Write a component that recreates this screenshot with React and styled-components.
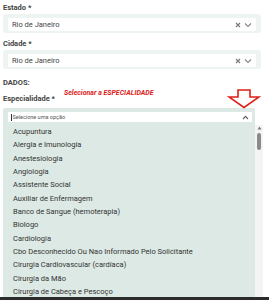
import React from "react";
import styled, { createGlobalStyle } from "styled-components";

const Global = createGlobalStyle`
  html, body { margin: 0; padding: 0; background: #fff; }
  body { font-family: Roboto, "Liberation Sans", Arial, sans-serif; color: #333; }
  * { box-sizing: border-box; }
`;

const Page = styled.div`
  width: 269px;
  height: 300px;
  overflow: hidden;
  position: relative;
  display: flex;
  flex-direction: column;
`;

const Body = styled.div`
  flex: 1;
  min-height: 0;
  padding: 2px 8px 0 3px;
  display: flex;
  flex-direction: column;
  overflow: hidden;
`;

const Label = styled.div`
  position: relative;
  font-size: 7.5px;
  font-weight: 700;
  color: #444;
  height: 11px;
  line-height: 11px;
  margin-top: ${(p) => p.$mt || 0}px;
`;

const Annotation = styled.span`
  position: absolute;
  left: 61px;
  top: -5px;
  color: #e0201a;
  font-style: italic;
  font-weight: 700;
  font-size: 7px;
  white-space: nowrap;
`;

const SelectOuter = styled.div`
  margin-top: 1px;
  background: #eef4f1;
  border-radius: 3px;
  padding: 4px 5px 2px 5px;
  height: 19px;
`;

const SelectInner = styled.div`
  background: #fff;
  height: 13px;
  border-radius: 2px;
  display: flex;
  align-items: center;
  padding: 0 4px 0 4px;
  font-size: 7.5px;
  color: #444;
`;

const Value = styled.span`
  flex: 1;
`;

const Icons = styled.span`
  display: flex;
  align-items: center;
  gap: 3px;
  color: #888;
`;

const Dropdown = styled.div`
  margin-top: 4px;
  margin-right: -2px;
  flex: 1;
  min-height: 0;
  display: flex;
  flex-direction: column;
  overflow: hidden;
`;

const Header = styled.div`
  background: #dce9e4;
  padding: 4px 3px 3px 5px;
  margin-right: 8px;
  border-radius: 2px 2px 0 0;
`;

const Search = styled.div`
  background: #fff;
  height: 10px;
  display: flex;
  align-items: center;
  padding-left: 3px;
  padding-right: 3px;
  font-size: 5.5px;
  color: #555;
`;

const Caret = styled.span`
  width: 0.5px;
  height: 7px;
  background: #333;
  margin-right: 1px;
`;

const ListWrap = styled.div`
  flex: 1;
  min-height: 0;
  display: flex;
  overflow: hidden;
`;

const List = styled.ul`
  flex: 1;
  list-style: none;
  margin: 0;
  padding: 0;
  background: #dce9e4;
`;

const Item = styled.li`
  height: 13.35px;
  line-height: 13.35px;
  padding-left: 10px;
  font-size: 7.5px;
  color: #333;
  white-space: nowrap;
`;

const Scroll = styled.div`
  width: 8px;
  background: #f4f4f4;
  display: flex;
  flex-direction: column;
  align-items: center;
  padding-top: 1px;
`;

const Thumb = styled.div`
  width: 4px;
  height: 17px;
  margin-top: 3px;
  border-radius: 2px;
  background: #8a8a8a;
`;

const Footer = styled.div`
  flex: none;
  height: 3px;
  background: #2b2b2b;
`;

const ArrowSvg = styled.svg`
  position: absolute;
  left: 227px;
  top: 89px;
`;

const X = () => (
  <svg width="6" height="6" viewBox="0 0 6 6">
    <path d="M1 1L5 5M5 1L1 5" stroke="#777" strokeWidth="1.1" />
  </svg>
);
const Down = () => (
  <svg width="8" height="6" viewBox="0 0 8 6">
    <path d="M1 1.5L4 4.5L7 1.5" stroke="#888" strokeWidth="1.1" fill="none" />
  </svg>
);
const Up = () => (
  <svg width="7" height="5" viewBox="0 0 7 5">
    <path d="M1 4L3.5 1.3L6 4" stroke="#666" strokeWidth="1.2" fill="none" />
  </svg>
);

const items = [
  "Acupuntura",
  "Alergia e Imunologia",
  "Anestesiologia",
  "Angiologia",
  "Assistente Social",
  "Auxiliar de Enfermagem",
  "Banco de Sangue (hemoterapia)",
  "Biologo",
  "Cardiologia",
  "Cbo Desconhecido Ou Nao Informado Pelo Solicitante",
  "Cirurgia Cardiovascular (cardíaca)",
  "Cirurgia da Mão",
  "Cirurgia de Cabeça e Pescoço",
];

function Select({ value }) {
  return (
    <SelectOuter>
      <SelectInner>
        <Value>{value}</Value>
        <Icons>
          <X />
          <Down />
        </Icons>
      </SelectInner>
    </SelectOuter>
  );
}

export default function App() {
  return (
    <>
      <Global />
      <Page>
        <Body>
          <Label>Estado *</Label>
          <Select value="Rio de Janeiro" />
          <Label $mt={5}>Cidade *</Label>
          <Select value="Rio de Janeiro" />
          <Label $mt={8}>DADOS:</Label>
          <Label $mt={5}>
            Especialidade *
            <Annotation>Selecionar a ESPECIALIDADE</Annotation>
          </Label>
          <Dropdown>
            <Header>
              <Search>
                <Caret />
                <Value>Selecione uma opção</Value>
                <Up />
              </Search>
            </Header>
            <ListWrap>
              <List>
                {items.map((t) => (
                  <Item key={t}>{t}</Item>
                ))}
              </List>
              <Scroll>
                <svg width="5" height="4" viewBox="0 0 5 4">
                  <path d="M0.5 3.5L2.5 0.5L4.5 3.5Z" fill="#777" />
                </svg>
                <Thumb />
              </Scroll>
            </ListWrap>
          </Dropdown>
        </Body>
        <Footer />
        <ArrowSvg width="34" height="20" viewBox="0 0 34 20">
          <path
            d="M11 1H23V8H32L17 18.5L2 8H11Z"
            fill="none"
            stroke="#e0201a"
            strokeWidth="1.6"
            strokeLinejoin="miter"
          />
        </ArrowSvg>
      </Page>
    </>
  );
}
